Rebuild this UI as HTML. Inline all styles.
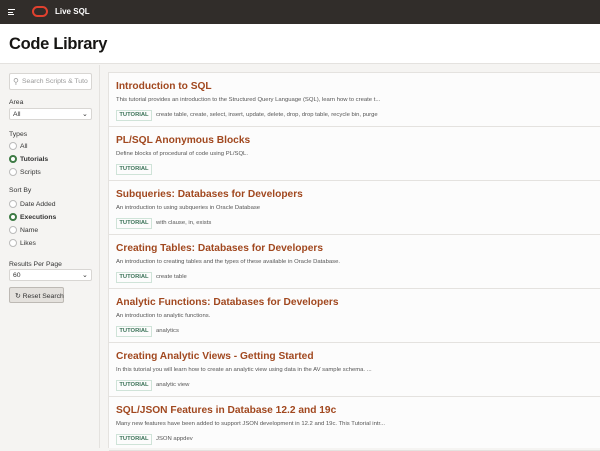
<!DOCTYPE html>
<html><head><style>
*{margin:0;padding:0;box-sizing:border-box}
body{width:600px;height:448px;overflow:hidden;background:#f5f4f2;font-family:"Liberation Sans",sans-serif;position:relative}
.hdr{position:absolute;left:0;top:0;width:600px;height:24px;background:#312d2a}
.ttl{position:absolute;left:0;top:24px;width:600px;height:40px;background:#fff;border-bottom:1px solid #e4e2df}
.ttl h1{position:absolute;left:9px;top:11px;font-size:16.5px;font-weight:bold;color:#161513;letter-spacing:-0.3px}
.side{position:absolute;left:0;top:65px;width:100px;height:383px;border-right:1px solid #e4e2df}
.a{position:absolute;font-size:6.8px;color:#333;white-space:nowrap}
.box{position:absolute;left:9px;width:83px;background:#fff;border:1px solid #d8d6d3;border-radius:2px;overflow:hidden}
.rad{position:absolute;left:9px;width:8px;height:8px;border-radius:50%;border:1px solid #bbb;background:#fff}
.rad.on{border:2px solid #3d7a44}
.main{position:absolute;left:108px;top:72px;width:492px;height:376px;background:#fcfcfc;border-left:1px solid #e4e2df;border-top:1px solid #e4e2df}
.it{position:absolute;left:0;width:492px;height:54px;border-bottom:1px solid #e4e2df}
.it h2{position:absolute;left:7px;top:8px;font-size:10.2px;color:#a1481f;font-weight:bold;white-space:nowrap}
.it p{position:absolute;left:7px;top:24px;font-size:5.9px;color:#555;white-space:nowrap}
.tag{position:absolute;left:7px;top:37px;width:36px;height:11px;text-align:center;border:1px solid #cfe3d8;font-size:5.8px;line-height:9px;color:#3b7358;font-weight:bold}
.kw{position:absolute;left:47px;top:39px;font-size:5.9px;color:#555;white-space:nowrap}
</style></head><body>
<div class="hdr">
<div style="position:absolute;left:8px;top:9px;width:7px;height:1.2px;background:#fff"></div>
<div style="position:absolute;left:8px;top:11.5px;width:5px;height:1.2px;background:#fff"></div>
<div style="position:absolute;left:8px;top:14px;width:6px;height:1.2px;background:#fff"></div>
<div style="position:absolute;left:32px;top:6px;width:16px;height:11px;border:2px solid #e0412f;border-radius:6px"></div>
<div style="position:absolute;left:55px;top:7px;font-size:8px;font-weight:bold;color:#fff">Live SQL</div>
</div>
<div class="ttl"><h1>Code Library</h1></div>
<div class="side">
<div class="box" style="top:8px;height:17px"><span class="a" style="left:3px;top:3px;color:#999;font-size:8px">&#9906;</span><span class="a" style="left:12px;top:4px;color:#999;font-size:6.8px">Search Scripts &amp; Tuto</span></div>
<div class="a" style="left:9px;top:34px">Area</div>
<div class="box" style="top:43px;height:12px"><span class="a" style="left:3px;top:2px">All</span><span class="a" style="left:72px;top:1px">&#8964;</span></div>
<div class="a" style="left:9px;top:66px">Types</div>
<div class="rad" style="top:77px"></div><div class="a" style="left:20px;top:77.5px">All</div>
<div class="rad on" style="top:90px"></div><div class="a" style="left:20px;top:90.5px;font-weight:bold">Tutorials</div>
<div class="rad" style="top:103px"></div><div class="a" style="left:20px;top:103.5px">Scripts</div>
<div class="a" style="left:9px;top:122px">Sort By</div>
<div class="rad" style="top:135px"></div><div class="a" style="left:20px;top:135.5px">Date Added</div>
<div class="rad on" style="top:148px"></div><div class="a" style="left:20px;top:148.5px;font-weight:bold">Executions</div>
<div class="rad" style="top:161px"></div><div class="a" style="left:20px;top:161.5px">Name</div>
<div class="rad" style="top:174px"></div><div class="a" style="left:20px;top:174.5px">Likes</div>
<div class="a" style="left:9px;top:196px">Results Per Page</div>
<div class="box" style="top:204px;height:12px"><span class="a" style="left:3px;top:2px">60</span><span class="a" style="left:72px;top:1px">&#8964;</span></div>
<div style="position:absolute;left:9px;top:222px;width:55px;height:16px;background:#e4e1dd;border:1px solid #bdb9b4;border-radius:2px"><span class="a" style="left:5px;top:4px;font-size:6.8px">&#8635; Reset Search</span></div>
</div>
<div class="main">
<div class="it" style="top:0"><h2>Introduction to SQL</h2><p>This tutorial provides an introduction to the Structured Query Language (SQL), learn how to create t...</p><span class="tag">TUTORIAL</span><span class="kw">create table, create, select, insert, update, delete, drop, drop table, recycle bin, purge</span></div>
<div class="it" style="top:54px"><h2>PL/SQL Anonymous Blocks</h2><p>Define blocks of procedural of code using PL/SQL.</p><span class="tag">TUTORIAL</span></div>
<div class="it" style="top:108px"><h2>Subqueries: Databases for Developers</h2><p>An introduction to using subqueries in Oracle Database</p><span class="tag">TUTORIAL</span><span class="kw">with clause, in, exists</span></div>
<div class="it" style="top:162px"><h2>Creating Tables: Databases for Developers</h2><p>An introduction to creating tables and the types of these available in Oracle Database.</p><span class="tag">TUTORIAL</span><span class="kw">create table</span></div>
<div class="it" style="top:216px"><h2>Analytic Functions: Databases for Developers</h2><p>An introduction to analytic functions.</p><span class="tag">TUTORIAL</span><span class="kw">analytics</span></div>
<div class="it" style="top:270px"><h2>Creating Analytic Views - Getting Started</h2><p>In this tutorial you will learn how to create an analytic view using data in the AV sample schema. ...</p><span class="tag">TUTORIAL</span><span class="kw">analytic view</span></div>
<div class="it" style="top:324px"><h2>SQL/JSON Features in Database 12.2 and 19c</h2><p>Many new features have been added to support JSON development in 12.2 and 19c. This Tutorial intr...</p><span class="tag">TUTORIAL</span><span class="kw">JSON appdev</span></div>
</div>
</body></html>
